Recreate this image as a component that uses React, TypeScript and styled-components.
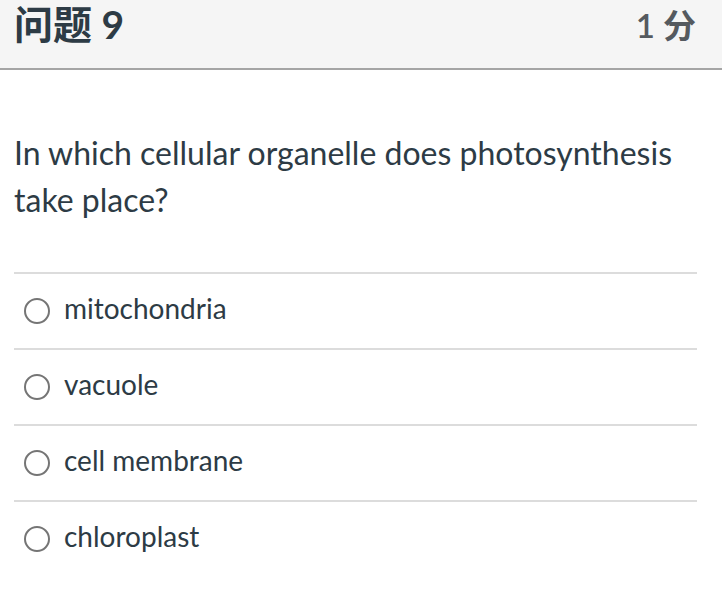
import React from 'react'
import styled, { createGlobalStyle } from 'styled-components'

const GlobalStyle = createGlobalStyle`
    html, body {
        margin: 0;
        padding: 0;
        background: #ffffff;
    }
    body {
        font-family: Lato, "Noto Sans CJK SC", "Noto Sans", sans-serif;
        color: #2d3b45;
    }
`

const Page = styled.div`
    width: 722px;
    height: 602px;
    overflow: hidden;
    background: #ffffff;
`

const Header = styled.div`
    display: flex;
    justify-content: space-between;
    align-items: flex-start;
    height: 68px;
    padding: 0 26px 0 14px;
    background-color: #f5f5f5;
    border-bottom: 2px solid #a5a5a5;
`

const Title = styled.h2`
    margin: 0;
    font-size: 39px;
    line-height: 48px;
    font-weight: 700;
    color: #2d3b45;
`

const Points = styled.span`
    font-size: 33px;
    line-height: 50px;
    font-weight: 600;
    color: #555a5f;
`

const Body = styled.div`
    padding: 59px 25px 0 14px;
`

const Question = styled.p`
    margin: 0 0 49px;
    font-size: 32px;
    line-height: 47px;
    color: #2d3b45;
`

const Options = styled.ul`
    list-style: none;
    margin: 0;
    padding: 0;
    border-top: 2px solid #dcdcdc;
`

const Option = styled.li<{ last?: boolean }>`
    display: flex;
    align-items: center;
    gap: 14px;
    height: 74px;
    padding-left: 10px;
    border-bottom: ${({ last }) => (last ? 'none' : '2px solid #dcdcdc')};
`

const Radio = styled.span`
    width: 22px;
    height: 22px;
    border-radius: 50%;
    border: 2px solid #757575;
    background: #ffffff;
    flex-shrink: 0;
`

const Label = styled.span`
    font-size: 28px;
    line-height: 32px;
    margin-top: -7px;
    color: #2d3b45;
`

const answers = ['mitochondria', 'vacuole', 'cell membrane', 'chloroplast']

const App: React.FunctionComponent = () => {
    return (
        <>
            <GlobalStyle />
            <Page>
                <Header>
                    <Title>问题 9</Title>
                    <Points>1 分</Points>
                </Header>
                <Body>
                    <Question>
                        In which cellular organelle does photosynthesis take place?
                    </Question>
                    <Options>
                        {answers.map((a, i) => (
                            <Option key={a} last={i === answers.length - 1}>
                                <Radio />
                                <Label>{a}</Label>
                            </Option>
                        ))}
                    </Options>
                </Body>
            </Page>
        </>
    )
}

export default App
